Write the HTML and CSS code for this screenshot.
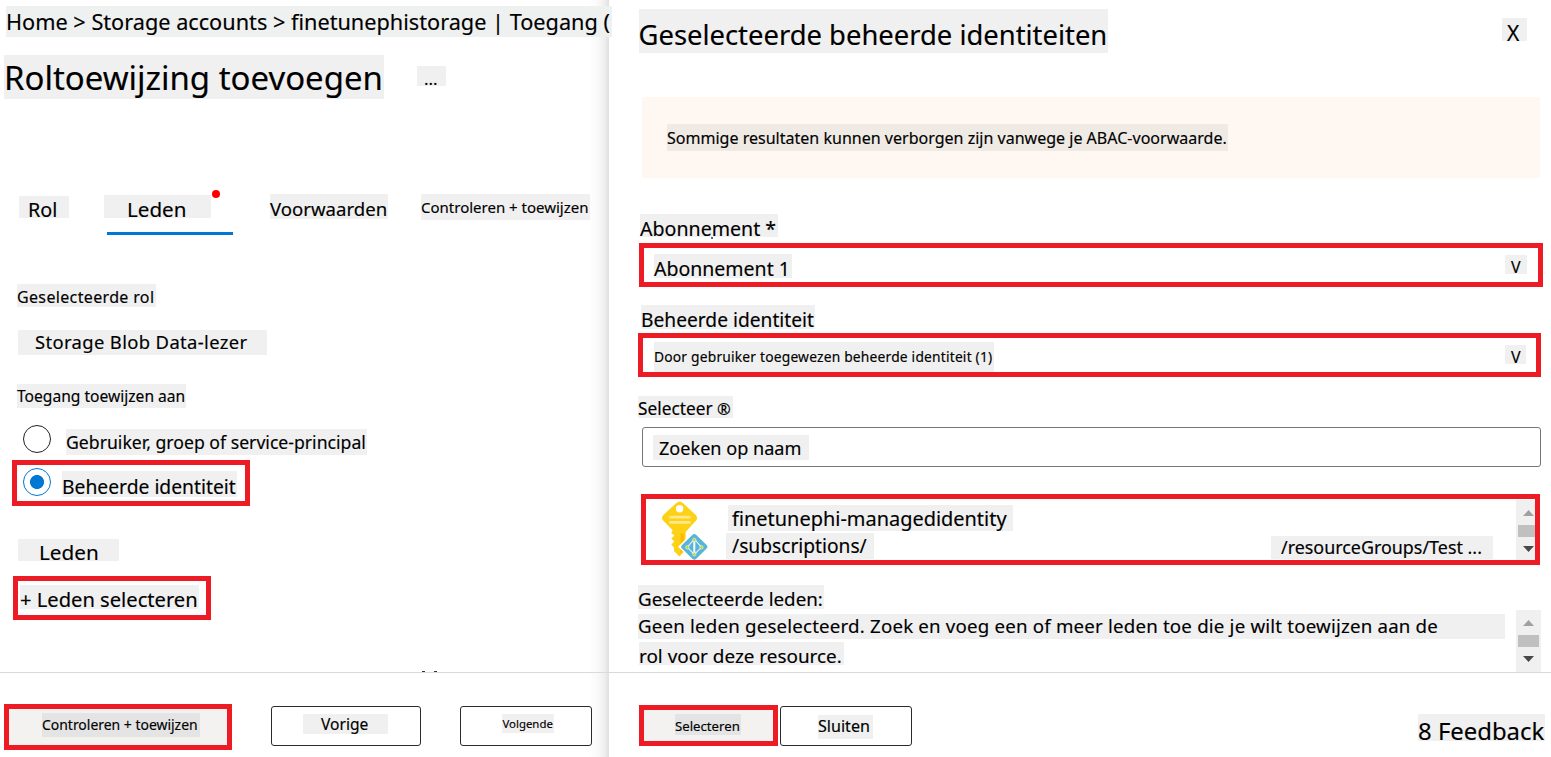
FILE: index.html
```html
<!DOCTYPE html>
<html lang="nl">
<head>
<meta charset="utf-8">
<title>Roltoewijzing toevoegen</title>
<link rel="stylesheet" href="styles.css">
</head>
<body>
<div class="app">
  <main class="page">
    <nav class="tag crumb">Home &gt; Storage accounts &gt; finetunephistorage | Toegang (</nav>
    <header class="title-row">
      <h1 class="tag title">Roltoewijzing toevoegen</h1>
      <span class="tag more">...</span>
    </header>
    <div class="tabs">
      <span class="tag tab-role">Rol</span>
      <div class="tab-active"><span class="tag tab-members">Leden</span><i class="tab-dot"></i></div>
      <span class="tag tab-conditions">Voorwaarden</span>
      <span class="tag tab-review">Controleren + toewijzen</span>
    </div>
    <span class="tag role-label">Geselecteerde rol</span>
    <span class="tag role-value">Storage Blob Data-lezer</span>
    <span class="tag access-label">Toegang toewijzen aan</span>
    <label class="radio-row"><i class="radio"></i><span class="tag radio-user">Gebruiker, groep of service-principal</span></label>
    <label class="radio-row marked radio-marked"><i class="radio checked"></i><span class="tag radio-identity">Beheerde identiteit</span></label>
    <span class="tag members-label">Leden</span>
    <div class="marked members-marked"><span class="tag members-link">+ Leden selecteren</span></div>
    <div class="clipped"><i></i><i></i></div>
    <footer class="page-footer">
      <div class="marked filled review-btn"><span class="tag review-text">Controleren + toewijzen</span></div>
      <div class="btn prev-btn"><span class="tag prev-text">Vorige</span></div>
      <div class="btn next-btn"><span class="tag next-text">Volgende</span></div>
    </footer>
  </main>
  <aside class="panel">
    <header class="panel-head">
      <h2 class="tag panel-title">Geselecteerde beheerde identiteiten</h2>
      <span class="tag close">X</span>
    </header>
    <div class="banner"><span class="tag banner-text">Sommige resultaten kunnen verborgen zijn vanwege je ABAC-voorwaarde.</span></div>
    <span class="tag sub-label">Abonnement *<i class="speck"></i></span>
    <div class="marked sub-select"><span class="tag sub-value">Abonnement 1</span><span class="tag caret">V</span></div>
    <span class="tag identity-label">Beheerde identiteit</span>
    <div class="marked identity-select"><span class="tag identity-value">Door gebruiker toegewezen beheerde identiteit (1)</span><span class="tag caret">V</span></div>
    <span class="tag select-label">Selecteer <span class="reg">®</span></span>
    <div class="search"><span class="tag search-text">Zoeken op naam</span></div>
    <div class="marked result">
      <svg class="key" width="50" height="61" viewBox="0 0 50 61">
        <path fill="#fcd116" d="M16.300 4.100Q19.600 .8 22.900 4.100L35.800 16Q38.400 19 35.800 21.800L27.200 31.200Q25.600 32.600 25.600 34.500V51L19.500 57.500L14 52V48.500L11.300 45.500L14.400 42.500L11.300 39.500L14.400 36.500L11.300 34L12.600 31.300L3.400 21.800Q.6 19 3.400 16Z"/>
        <path fill="#ffb900" d="M20.500 34.500H24V51L20.500 54.500Z"/>
        <circle cx="19.600" cy="9.700" r="3.700" fill="#fff"/>
        <path stroke="#fff" stroke-opacity=".5" stroke-width="2.800" d="M9.300 18.200H30.500M9.300 23.300H30.500"/>
        <path fill="#fff" d="M34.500 31.800L49.500 47.700L34.500 63L18 47.700Z"/>
        <path fill="#59b4d9" d="M32.300 36Q34.300 34 36.300 36L46.600 46Q48.400 47.800 46.600 49.600L36.300 59.800Q34.300 61.600 32.300 59.800L22 49.600Q20.200 47.800 22 46Z"/>
        <path fill="none" stroke="#fff" stroke-opacity=".85" stroke-width="1.100" d="M34.300 40L27.300 48.300L34.300 55.500L41.500 48.300Z"/>
        <path stroke="#fff" stroke-width="2" d="M34.300 40V55"/>
        <g fill="#b8d432" stroke="#fff" stroke-width=".5"><circle cx="34.300" cy="41" r="1.700"/><circle cx="27.300" cy="48.300" r="1.700"/><circle cx="41.500" cy="48.300" r="1.700"/><circle cx="34.300" cy="55.300" r="1.700"/></g>
      </svg>
      <div class="result-text">
        <span class="tag result-name">finetunephi-managedidentity</span>
        <span class="tag result-path">/subscriptions/</span>
      </div>
      <span class="tag result-group">/resourceGroups/Test ...</span>
      <div class="scroll"><i class="up"></i><i class="thumb"></i><i class="down"></i></div>
    </div>
    <div class="selected">
      <div class="selected-text">
        <span class="tag selected-label">Geselecteerde leden:</span>
        <span class="tag empty-1">Geen leden geselecteerd. Zoek en voeg een of meer leden toe die je wilt toewijzen aan de</span>
        <span class="tag empty-2">rol voor deze resource.</span>
      </div>
      <div class="scroll scroll-wide"><i class="up"></i><i class="thumb"></i><i class="down"></i></div>
    </div>
    <footer class="panel-footer">
      <div class="marked filled select-btn"><span class="tag select-text">Selecteren</span></div>
      <div class="btn close-btn"><span class="tag close-text">Sluiten</span></div>
      <span class="tag feedback">8 Feedback</span>
    </footer>
  </aside>
</div>
</body>
</html>
```
FILE: styles.css
```css
* { box-sizing: border-box; }
body { margin: 0; background: #fff; color: #000; font-family: "Noto Sans", sans-serif; }
i { display: block; flex: none; }
h1, h2 { font-weight: 400; }
.app { display: flex; width: 1551px; height: 757px; overflow: hidden; }
.page { display: flex; flex-direction: column; align-items: flex-start; width: 609px; flex: none;
  background: linear-gradient(to right, #fff 588px, #fafafa 597px, #f0f0f0 604px, #e0e0e0 609px); }
.panel { display: flex; flex-direction: column; align-items: flex-start; width: 942px; background: #fff; }
.tag { display: block; flex: none; margin: 0; background: #f0f0f0; white-space: nowrap; -webkit-text-stroke: .15px #000; }
.marked { display: flex; align-items: flex-start; flex: none; border: 5px solid #ed1c24; }
.filled { background: #f3f2f1; }
.filled .tag { background: #e4e4e4; }
.btn { display: flex; align-items: flex-start; flex: none; height: 40px; border: 1px solid #2b2b2b; border-radius: 3px; background: #fff; }

/* Page heading */
.crumb { position: relative; width: 606px; height: 31px; margin: 6px 0 0 6px; font-size: 21.7px; line-height: 31px; background: #eff1f0; }
.title-row { display: flex; margin: 18px 0 0 4px; }
.title { width: 380px; height: 44px; font-size: 32.95px; line-height: 45px; }
.more { width: 29px; height: 20px; margin: 11px 0 0 33px; padding-left: 7px; font-size: 17px; line-height: 26px; }

/* Tabs */
.tabs { display: flex; height: 41px; margin: 95px 0 0 19px; }
.tab-role { width: 50px; height: 22px; margin-top: 2px; padding-left: 9px; font-size: 19.8px; line-height: 28px; }
.tab-active { position: relative; width: 129px; height: 41px; margin-left: 35px; padding-top: 1px; }
.tab-active::after { content: ""; display: block; width: 126px; height: 3px; margin: 14px 0 0 3px; background: #0078d4; }
.tab-members { width: 107px; height: 23px; padding-left: 23px; font-size: 20.6px; line-height: 28px; }
.tab-dot { position: absolute; left: 108px; top: -4px; width: 8px; height: 8px; border-radius: 50%; background: #f00; }
.tab-conditions { width: 118px; height: 25px; margin-left: 37px; font-size: 18.6px; line-height: 29px; }
.tab-review { width: 169px; height: 26px; margin-left: 33px; font-size: 15px; line-height: 27px; }

/* Members form */
.role-label { width: 139px; height: 23px; margin: 49px 0 0 17px; font-size: 16px; letter-spacing: .35px; line-height: 26px; }
.role-value { width: 249px; height: 25px; margin: 23px 0 0 18px; padding-left: 17px; font-size: 18.4px; letter-spacing: .37px; line-height: 24px; }
.access-label { width: 169px; height: 24px; margin: 29px 0 0 17px; font-size: 15.6px; line-height: 24px; }
.radio-row { display: flex; }
.radio { width: 28px; height: 28px; border: 1px solid #222; border-radius: 50%; }
.radio-row > .radio:not(.checked) { margin: 17px 0 0 23px; }
.radio.checked { margin: 3px 0 0 6px; border-color: #0078d4; background: radial-gradient(circle, #0078d4 6.600px, #fff 7.400px); }
.radio-user { width: 301px; height: 26px; margin: 21px 0 0 15px; font-size: 17.65px; line-height: 26px; }
.radio-marked { width: 238px; height: 46px; margin: 5px 0 0 12px; }
.radio-identity { width: 175px; height: 26px; margin: 6px 0 0 11px; font-size: 19.3px; line-height: 32px; }
.members-label { width: 101px; height: 22px; margin: 33px 0 0 18px; padding-left: 21px; font-size: 20.7px; line-height: 26px; }
.members-marked { width: 198px; height: 44px; margin: 15px 0 0 13px; }
.members-link { width: 179px; height: 24px; margin: 4px 0 0 2px; font-size: 20.15px; line-height: 29px; }
.clipped { display: flex; gap: 9px; margin: 51px 0 0 422px; }
.clipped i { width: 3px; height: 1px; background: #333; }

/* Footers */
.page-footer, .panel-footer { display: flex; align-items: flex-start; height: 85px; border-top: 1px solid #dadada; }
.page-footer { width: 609px; padding: 31px 0 0 4px; }
.review-btn { width: 228px; height: 46px; }
.review-text { width: 158px; height: 24px; margin: 4px 0 0 33px; font-size: 13.95px; line-height: 24px; }
.prev-btn { width: 150px; margin: 2px 0 0 39px; }
.prev-text { width: 85px; height: 20px; margin: 7px 0 0 31px; padding-left: 18px; font-size: 15.6px; line-height: 20px; }
.next-btn { width: 132px; margin: 2px 0 0 39px; }
.next-text { width: 52px; height: 19px; margin: 7px 0 0 41px; padding-left: .5px; font-size: 11.4px; line-height: 19px; }

/* Identity panel */
.panel-head { display: flex; margin: 9px 0 0 30px; }
.panel-title { width: 469px; height: 44px; font-size: 27.4px; line-height: 52px; text-indent: -.5px; }
.close { width: 25px; height: 23px; margin: 9px 0 0 394px; padding-left: 5px; font-size: 21px; line-height: 30px; }
.banner { width: 898px; height: 81px; margin: 44px 0 0 33px; padding: 27px 0 0 25px; border-radius: 3px; background: #fff7f1; }
.banner-text { width: 561px; height: 27px; background: #efeae4; font-size: 16.05px; line-height: 28px; }
.sub-label { position: relative; width: 138px; height: 23px; margin: 36px 0 0 31px; font-size: 19.6px; line-height: 29px; }
.speck { position: absolute; left: 71px; top: 23px; width: 2px; height: 2px; background: #4a6f96; }
.sub-select { width: 904px; height: 44px; margin: 6px 0 0 30px; }
.sub-value { width: 138px; height: 24px; margin: 6px 0 0 10px; font-size: 19.5px; line-height: 30px; }
.caret { width: 22px; height: 19px; padding-left: 6px; font-size: 16px; line-height: 24px; }
.sub-select .caret { margin: 7px 0 0 713px; }
.identity-label { width: 174px; height: 24px; margin: 18px 0 0 32px; font-size: 19.2px; line-height: 30px; }
.identity-select { width: 903px; height: 44px; margin: 4px 0 0 29px; }
.identity-value { width: 340px; height: 30px; margin: 4px 0 0 11px; font-size: 13.8px; letter-spacing: .2px; line-height: 29px; }
.identity-select .caret { width: 21px; margin: 7px 0 0 511px; line-height: 25px; }
.select-label { width: 95px; height: 22px; margin: 19px 0 0 29px; font-size: 17.3px; line-height: 26px; }
.reg { font-size: 16.5px; }
.search { width: 899px; height: 40px; margin: 9px 0 0 33px; padding: 7px 0 0 10px; border: 1px solid #767676; border-radius: 3px; }
.search-text { width: 156px; height: 25px; padding-left: 6px; font-size: 18.1px; line-height: 26px; }

/* Search result */
.result { width: 899px; height: 71px; margin: 27px 0 0 32px; overflow: hidden; }
.key { display: block; flex: none; margin: 0 0 0 14px; }
.result-text { width: 289px; flex: none; margin: 6px 0 0 16px; }
.result-name { width: 285px; height: 26px; margin-left: 2px; padding-left: 4px; font-size: 19.95px; line-height: 27px; }
.result-path { width: 148px; height: 26px; margin-top: 2px; padding-left: 6px; font-size: 19.2px; line-height: 26px; }
.result-group { width: 222px; height: 23px; margin: 37px 0 0 256px; padding-left: 10px; font-size: 17.9px; line-height: 23px; }
.scroll { display: flex; flex-direction: column; flex: none; width: 25px; height: 62px; margin: 1px 0 0 23px; padding-top: 10px; background: #f0f0f0; }
.up, .down { width: 11px; height: 6px; margin-left: 7px; }
.up { background: #a0a0a0; clip-path: polygon(50% 0, 100% 100%, 0 100%); }
.down { margin-top: 9px; background: #484848; clip-path: polygon(0 0, 100% 0, 50% 100%); }
.thumb { width: 21px; height: 12px; margin: 9px 0 0 2px; background: #c0c0c0; }

/* Selected members */
.selected { display: flex; width: 942px; height: 87px; margin-top: 20px; padding-left: 29px; }
.selected-text { width: 878px; flex: none; }
.selected-label { width: 186px; height: 24px; font-size: 18.8px; line-height: 28px; }
.empty-1 { width: 867px; height: 25px; margin-top: 5px; font-size: 18.7px; letter-spacing: .19px; line-height: 24px; }
.empty-2 { width: 205px; height: 23px; margin: 3px 0 0 1px; font-size: 18.9px; line-height: 28px; }
.scroll-wide { margin: 25px 0 0; }
.panel-footer { width: 942px; padding: 32px 0 0 30px; }
.select-btn { width: 139px; height: 41px; }
.select-text { width: 66px; height: 21px; margin: 4px 0 0 31px; font-size: 13.2px; line-height: 24px; }
.close-btn { width: 132px; margin: 1px 0 0 2px; }
.close-text { width: 55px; height: 24px; margin: 8px 0 0 37px; font-size: 16.1px; line-height: 23px; }
.feedback { width: 127px; height: 27px; margin: 9px 0 0 506px; font-size: 23.9px; line-height: 33px; }
```
